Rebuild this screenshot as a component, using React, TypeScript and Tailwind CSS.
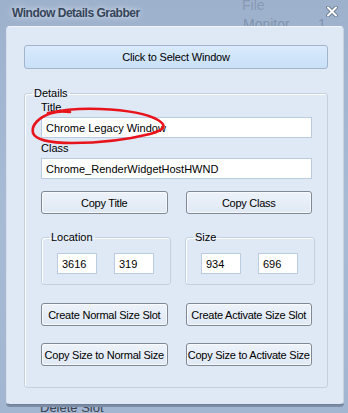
import React from 'react';

const font = { fontFamily: '"Liberation Sans", Arial, sans-serif' };

function WinButton({ label, primary }: { label: string; primary?: boolean }) {
    return (
        <button
            className={
                primary
                    ? 'h-[24px] w-full rounded-[3px] border border-[#a3b4cb] bg-gradient-to-b from-[#d9ebfc] to-[#c9e0f7] text-[11px] tracking-[-0.2px] whitespace-nowrap text-black'
                    : 'h-[23px] w-full rounded-[3px] border border-[#7f8894] bg-gradient-to-b from-[#eef3fa] to-[#dfe8f4] text-[11px] tracking-[-0.25px] whitespace-nowrap text-black shadow-[inset_0_0_0_1px_#f7faff]'
            }
        >
            {label}
        </button>
    );
}

function TextBox({ value, className = '' }: { value: string; className?: string }) {
    return (
        <div className={`flex h-[21px] items-center border border-[#bccbe0] bg-white pl-[4px] text-[11px] whitespace-nowrap text-black ${className}`}>
            {value}
        </div>
    );
}

function SmallGroup({ title, a, b }: { title: string; a: string; b: string }) {
    return (
        <fieldset className="rounded-[3px] border border-[#c3d0df] pr-[16px] pb-[10px] pl-[15px] shadow-[inset_1px_1px_0_#ffffff]">
            <legend className="ml-[-8px] px-[2px] text-[11px] leading-[13px] text-black">{title}</legend>
            <div className="mt-[9px] flex gap-[17px]">
                <TextBox value={a} className="w-[40px]" />
                <TextBox value={b} className="w-[40px]" />
            </div>
        </fieldset>
    );
}

export default function App() {
    return (
        <div
            style={font}
            className="relative h-[413px] w-[348px] overflow-hidden bg-gradient-to-b from-[#9db1cd] via-[#a8bbd5] to-[#a3b6d1]"
        >
            {/* things behind the glass */}
            <div className="absolute top-[-5px] left-[242px] text-[14px] text-[#8799b3]">File</div>
            <div className="absolute top-[14px] left-[243px] text-[14px] text-[#7f92ad]">Monitor</div>
            <div className="absolute top-[14px] left-[318px] text-[14px] text-[#7f92ad]">1</div>
            <div className="absolute top-[398px] left-[40px] text-[13px] text-[#3c4350]">Delete Slot</div>

            {/* title bar */}
            <div className="relative flex h-[26px] items-center pl-[12px]">
                <span className="text-[12px] font-bold tracking-[-0.5px] text-[#36455a] [text-shadow:0_0_6px_rgba(255,255,255,0.8)]">
                    Window Details Grabber
                </span>
                <svg className="absolute top-[6px] right-[10px]" width="12" height="11" viewBox="0 0 12 11">
                    <path d="M2 1.5 L10 9.5 M10 1.5 L2 9.5" stroke="#4a5a70" strokeWidth="3.4" strokeLinecap="round" />
                    <path d="M2 1.5 L10 9.5 M10 1.5 L2 9.5" stroke="#ffffff" strokeWidth="2.2" strokeLinecap="round" />
                </svg>
            </div>

            {/* client area */}
            <div className="relative mr-[4px] ml-[6px] h-[379px] rounded-[4px] border border-t-[#f3f7fc] border-r-[#c8d3e2] border-b-[#6f8098] border-l-[#d6e0ec] bg-[#dfe9f6] pr-[15px] pl-[17px] shadow-[0_2px_0_#7b8ca4]">
                <div className="mt-[17px]">
                    <WinButton label="Click to Select Window" primary />
                </div>

                <fieldset className="mt-[18px] h-[301px] rounded-[3px] border border-[#c3d0df] pr-[15px] pl-[16px] shadow-[inset_1px_1px_0_#ffffff]">
                    <legend className="ml-[-9px] px-[2px] text-[11px] leading-[13px] text-black">Details</legend>

                    <div className="mt-[1px] h-[13px] text-[11px] leading-[13px] text-black">Title</div>
                    <TextBox value="Chrome Legacy Window" className="mt-[3px]" />
                    <div className="mt-[4px] h-[13px] text-[11px] leading-[13px] text-black">Class</div>
                    <TextBox value="Chrome_RenderWidgetHostHWND" className="mt-[3px]" />

                    <div className="mt-[12px] grid grid-cols-2 gap-[18px]">
                        <WinButton label="Copy Title" />
                        <WinButton label="Copy Class" />
                    </div>

                    <div className="mt-[17px] grid grid-cols-2 gap-[17px]">
                        <SmallGroup title="Location" a="3616" b="319" />
                        <SmallGroup title="Size" a="934" b="696" />
                    </div>

                    <div className="mt-[18px] grid grid-cols-2 gap-[18px]">
                        <WinButton label="Create Normal Size Slot" />
                        <WinButton label="Create Activate Size Slot" />
                    </div>
                    <div className="mt-[17px] grid grid-cols-2 gap-[18px]">
                        <WinButton label="Copy Size to Normal Size" />
                        <WinButton label="Copy Size to Activate Size" />
                    </div>
                </fieldset>
            </div>

            {/* red marker scribble */}
            <svg className="pointer-events-none absolute top-0 left-0" width="348" height="413" viewBox="0 0 348 413">
                <path
                    d="M48 113 C62 110 80 108 100 109 C125 110 148 114 158 120 C168 126 164 130 150 134 C130 139 100 143 72 143 C52 143 36 141 33 133 C31 125 39 117 52 113 C58 111 64 111 70 112"
                    fill="none"
                    stroke="#e8141c"
                    strokeWidth="2.6"
                    strokeLinecap="round"
                />
            </svg>
        </div>
    );
}
